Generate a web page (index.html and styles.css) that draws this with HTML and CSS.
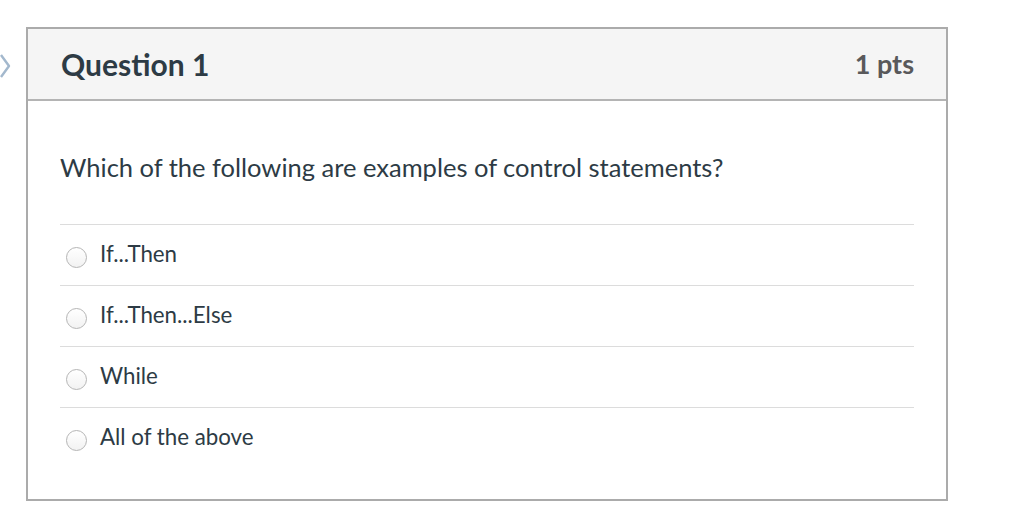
FILE: index.html
```html
<!DOCTYPE html>
<html>
<head>
<meta charset="utf-8">
<link rel="stylesheet" href="styles.css">
</head>
<body>
<div class="page">
  <svg class="chevron" width="14" height="26" viewBox="0 0 14 26"><path d="M1 2 L9 13 L1 24" fill="none" stroke="#a3b8cd" stroke-width="2.4" stroke-linejoin="round"/></svg>
  <div class="card">
    <div class="card-header">
      <h2 class="title">Question 1</h2>
      <span class="pts">1 pts</span>
    </div>
    <div class="card-body">
      <p class="question">Which of the following are examples of control statements?</p>
      <ul class="answers">
        <li class="answer"><span class="radio"></span><span class="label">If...Then</span></li>
        <li class="answer"><span class="radio"></span><span class="label">If...Then...Else</span></li>
        <li class="answer"><span class="radio"></span><span class="label">While</span></li>
        <li class="answer"><span class="radio"></span><span class="label">All of the above</span></li>
      </ul>
    </div>
  </div>
</div>
</body>
</html>
```
FILE: styles.css
```css
html, body {
  margin: 0;
  padding: 0;
  background: #ffffff;
}
body {
  font-family: Lato, "Open Sans", sans-serif;
  color: #2d3b45;
  width: 1024px;
  height: 510px;
  overflow: hidden;
}
.page {
  position: relative;
  padding: 27px 0 0 26px;
}
.chevron {
  position: absolute;
  left: 0;
  top: 53px;
}
.card {
  width: 918px;
  height: 470px;
  border: 2px solid #ababab;
}
.card-header {
  height: 70px;
  background: #f5f5f5;
  border-bottom: 2px solid #b4b4b4;
  display: flex;
  align-items: center;
  justify-content: space-between;
  padding: 0 32px 0 33px;
}
.title {
  margin: 0;
  font-size: 30px;
  font-weight: 700;
  color: #2d3b45;
  line-height: 36px;
}
.pts {
  font-size: 27px;
  font-weight: 700;
  color: #59595b;
  line-height: 36px;
}
.card-body {
  padding: 0 32px 0 32px;
}
.question {
  margin: 0;
  padding-top: 50px;
  height: 73px;
  font-size: 25.5px;
  line-height: 32px;
}
.answers {
  list-style: none;
  margin: 0;
  padding: 0;
}
.answer {
  height: 60px;
  border-top: 1px solid #dcdcdc;
  display: flex;
  align-items: center;
  padding-left: 6px;
}
.radio {
  width: 19px;
  height: 19px;
  border: 1px solid #b5b5b5;
  border-radius: 50%;
  background: linear-gradient(#ffffff, #f2f2f2);
  margin-right: 13px;
  margin-top: 4px;
  box-sizing: content-box;
  flex: none;
}
.label {
  font-size: 22.3px;
  color: #2d3b45;
  line-height: 28px;
  margin-top: -2px;
}
```
